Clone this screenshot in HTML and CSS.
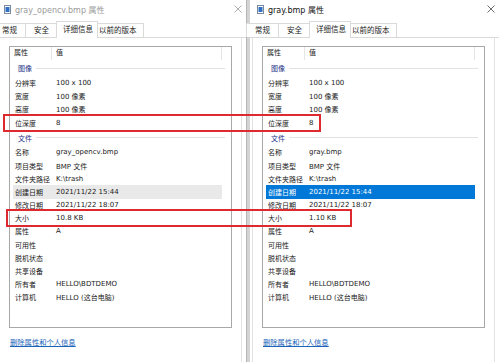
FILE: index.html
```html
<!DOCTYPE html>
<html lang="zh-CN">
<head>
    <meta charset="UTF-8">
    <meta name="viewport" content="width=device-width, initial-scale=1.0">
    <title>属性</title>
    <link rel="stylesheet" href="styles.css">
</head>
<body>
    <div class="desk">

        <div class="window inactive">
            <div class="titlebar">
                <svg class="file-icon" width="7" height="9" viewBox="0 0 7 9"><rect x="0.5" y="0.5" width="6" height="8" fill="#fff" stroke="#7a8aa0"/><rect x="1.5" y="2" width="4" height="5" fill="#2f6fc4"/></svg>
                <span class="title">gray_opencv.bmp 属性</span>
                <svg class="close" width="8" height="8" viewBox="0 0 8 8"><path d="M0.5 0.5 L7.5 7.5 M7.5 0.5 L0.5 7.5" stroke="currentColor" stroke-width="0.8"/></svg>
            </div>
            <div class="tabs">
                <span class="tab first">常规</span>
                <span class="tab">安全</span>
                <span class="tab active">详细信息</span>
                <span class="tab after-active">以前的版本</span>
            </div>
            <div class="page">
                <div class="list">
                    <div class="list-head">
                        <span class="head-name">属性</span>
                        <span class="head-value">值</span>
                    </div>
                    <div class="group"><span>图像</span><i></i></div>
                    <div class="row"><span class="name">分辨率</span><span>100 x 100</span></div>
                    <div class="row"><span class="name">宽度</span><span>100 像素</span></div>
                    <div class="row"><span class="name">高度</span><span>100 像素</span></div>
                    <div class="row"><span class="name">位深度</span><span>8</span></div>
                    <div class="group"><span>文件</span><i></i></div>
                    <div class="row"><span class="name">名称</span><span>gray_opencv.bmp</span></div>
                    <div class="row"><span class="name">项目类型</span><span>BMP 文件</span></div>
                    <div class="row"><span class="name">文件夹路径</span><span>K:\trash</span></div>
                    <div class="row selected"><span class="name">创建日期</span><span>2021/11/22 15:44</span></div>
                    <div class="row"><span class="name">修改日期</span><span>2021/11/22 18:07</span></div>
                    <div class="row"><span class="name">大小</span><span>10.8 KB</span></div>
                    <div class="row"><span class="name">属性</span><span>A</span></div>
                    <div class="row"><span class="name">可用性</span><span></span></div>
                    <div class="row"><span class="name">脱机状态</span><span></span></div>
                    <div class="row"><span class="name">共享设备</span><span></span></div>
                    <div class="row"><span class="name">所有者</span><span>HELLO\BDTDEMO</span></div>
                    <div class="row"><span class="name">计算机</span><span>HELLO (这台电脑)</span></div>
                </div>
                <a class="remove-link" href="#">删除属性和个人信息</a>
            </div>
        </div>

        <div class="window">
            <div class="titlebar">
                <svg class="file-icon" width="7" height="9" viewBox="0 0 7 9"><rect x="0.5" y="0.5" width="6" height="8" fill="#fff" stroke="#7a8aa0"/><rect x="1.5" y="2" width="4" height="5" fill="#2f6fc4"/></svg>
                <span class="title">gray.bmp 属性</span>
                <svg class="close" width="8" height="8" viewBox="0 0 8 8"><path d="M0.5 0.5 L7.5 7.5 M7.5 0.5 L0.5 7.5" stroke="currentColor" stroke-width="0.8"/></svg>
            </div>
            <div class="tabs">
                <span class="tab first">常规</span>
                <span class="tab">安全</span>
                <span class="tab active">详细信息</span>
                <span class="tab after-active">以前的版本</span>
            </div>
            <div class="page">
                <div class="list">
                    <div class="list-head">
                        <span class="head-name">属性</span>
                        <span class="head-value">值</span>
                    </div>
                    <div class="group"><span>图像</span><i></i></div>
                    <div class="row"><span class="name">分辨率</span><span>100 x 100</span></div>
                    <div class="row"><span class="name">宽度</span><span>100 像素</span></div>
                    <div class="row"><span class="name">高度</span><span>100 像素</span></div>
                    <div class="row"><span class="name">位深度</span><span>8</span></div>
                    <div class="group"><span>文件</span><i></i></div>
                    <div class="row"><span class="name">名称</span><span>gray.bmp</span></div>
                    <div class="row"><span class="name">项目类型</span><span>BMP 文件</span></div>
                    <div class="row"><span class="name">文件夹路径</span><span>K:\trash</span></div>
                    <div class="row selected"><span class="name">创建日期</span><span>2021/11/22 15:44</span></div>
                    <div class="row"><span class="name">修改日期</span><span>2021/11/22 18:07</span></div>
                    <div class="row"><span class="name">大小</span><span>1.10 KB</span></div>
                    <div class="row"><span class="name">属性</span><span>A</span></div>
                    <div class="row"><span class="name">可用性</span><span></span></div>
                    <div class="row"><span class="name">脱机状态</span><span></span></div>
                    <div class="row"><span class="name">共享设备</span><span></span></div>
                    <div class="row"><span class="name">所有者</span><span>HELLO\BDTDEMO</span></div>
                    <div class="row"><span class="name">计算机</span><span>HELLO (这台电脑)</span></div>
                </div>
                <a class="remove-link" href="#">删除属性和个人信息</a>
            </div>
        </div>

        <!-- red marks drawn over both dialogs -->
        <div class="mark mark-depth"></div>
        <div class="mark mark-size"></div>
    </div>
</body>
</html>
```

FILE: styles.css
```css
*{
    margin: 0;
    padding: 0;
    box-sizing: border-box;
}

body{
    width: 499px;
    height: 362px;
    overflow: hidden;
    background-color: #d4d4d4;
    font-family: "DejaVu Sans", "Noto Sans CJK SC", sans-serif;
    font-size: 7px;
    color: #1a1a1a;
}

.desk{
    position: relative;
    display: flex;
    gap: 3px;
    margin-left: -3px;
    height: 362px;
}

.window{
    width: 250px;
    flex-shrink: 0;
    background-color: #fff;
    border-right: 1px solid #b5b5b5;
    display: flex;
    flex-direction: column;
}

/* title bar */
.titlebar{
    height: 21px;
    display: flex;
    align-items: center;
    padding: 0 4px 3px 7px;
}

.file-icon{
    flex-shrink: 0;
}

.title{
    margin-left: 4px;
    flex: 1;
    font-size: 8px;
    color: #111;
}

.close{
    color: #444;
}

.inactive .title,
.inactive .close{
    color: #9a9a9a;
}

/* tabs */
.tabs{
    height: 17px;
    display: flex;
    align-items: flex-end;
    border-bottom: 1px solid #d9d9d9;
    font-size: 7.5px;
}

.tab{
    height: 14px;
    line-height: 13px;
    padding: 0 8px;
    border: 1px solid #dadada;
    border-bottom: none;
    margin-left: -1px;
    background-color: #fff;
}

.tab.first{
    margin-left: -4px;
}

.tab.active{
    position: relative;
    height: 17px;
    line-height: 15px;
    margin: 0 -2px -1px -2px;
    padding: 0 4px 0 6px;
    z-index: 1;
}

.tab.after-active{
    padding: 0 6px 0 3px;
}

/* tab page */
.page{
    flex: 1;
    margin: 0 4px 0 2px;
    padding: 8px 9px 0 9px;
    border-left: 1px solid #e3e3e3;
    border-right: 1px solid #e3e3e3;
}

.list{
    height: 282px;
    border: 1px solid #a8a8a8;
}

.list-head{
    height: 13px;
    display: flex;
    align-items: center;
}

.head-name{
    width: 42px;
    padding-left: 4px;
    border-right: 1px solid #e5e5e5;
    line-height: 13px;
}

.head-value{
    width: 170px;
    padding-left: 4px;
    border-right: 1px solid #e5e5e5;
    line-height: 13px;
}

.group{
    height: 16.5px;
    display: flex;
    align-items: center;
    padding-left: 8px;
    margin-right: 6px;
    color: #1e3287;
}

.group i{
    flex: 1;
    height: 1px;
    margin-left: 4px;
    background-color: #e2e2e2;
}

.row{
    height: 13.2px;
    display: flex;
    align-items: center;
    margin: 0 9px 0 3px;
    padding-left: 2px;
}

.row .name{
    width: 41px;
    flex-shrink: 0;
}

.row.selected{
    background-color: #0078d7;
    color: #fff;
}

.inactive .row.selected{
    background-color: #e9e9e9;
    color: #1a1a1a;
}

.remove-link{
    display: inline-block;
    margin-top: 9px;
    margin-left: 1px;
    font-size: 7.3px;
    color: #1a64b8;
    text-decoration: underline;
}

/* annotation boxes */
.mark{
    position: absolute;
    border: 2px solid #dd2a2f;
}

.mark-depth{
    left: 6px;
    top: 114px;
    width: 318px;
    height: 18px;
}

.mark-size{
    left: 9px;
    top: 209px;
    width: 346px;
    height: 18px;
}
```
